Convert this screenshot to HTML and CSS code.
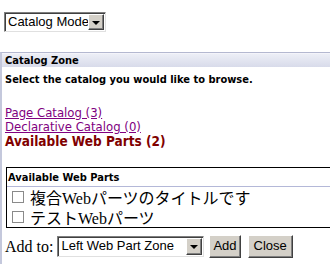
FILE: index.html
```html
<!DOCTYPE html>
<html lang="en">
<head>
    <meta charset="UTF-8">
    <title>Catalog Zone</title>
    <link rel="stylesheet" href="styles.css">
</head>
<body>
    <div class="mode-bar">
        <div class="dropdown mode-select">
            <span class="dropdown-text">Catalog Mode</span>
            <span class="dropdown-arrow"></span>
        </div>
    </div>

    <div class="catalog-zone">
        <div class="zone-header">Catalog Zone</div>
        <div class="zone-body">
            <div class="instruction">Select the catalog you would like to browse.</div>

            <div class="catalog-list">
                <a href="#" class="catalog-link">Page Catalog (3)</a>
                <a href="#" class="catalog-link">Declarative Catalog (0)</a>
                <span class="catalog-current">Available Web Parts (2)</span>
            </div>

            <div class="parts-box">
                <div class="parts-header">Available Web Parts</div>
                <label class="part-item"><input type="checkbox"> 複合Webパーツのタイトルです</label>
                <label class="part-item"><input type="checkbox"> テストWebパーツ</label>
            </div>

            <div class="add-row">
                <span class="add-label">Add to:</span>
                <div class="dropdown zone-select">
                    <span class="dropdown-text">Left Web Part Zone</span>
                    <span class="dropdown-arrow"></span>
                </div>
                <button class="btn">Add</button>
                <button class="btn">Close</button>
            </div>
        </div>
    </div>
</body>
</html>
```

FILE: styles.css
```css
html {
    overflow: hidden;
}
body {
    margin: 0;
    background: white;
    font-family: "Liberation Serif", "Noto Sans CJK JP", serif;
    font-size: 16px;
    color: black;
}
.mode-bar {
    padding: 12px 0 0 4px;
    height: 52px;
    box-sizing: border-box;
}
.dropdown {
    display: inline-flex;
    align-items: stretch;
    box-sizing: border-box;
    height: 20px;
    border: 1px solid #7f7f7f;
    border-right-color: #e0e0e0;
    border-bottom-color: #e0e0e0;
    box-shadow: inset 1px 1px 0 #404040;
    background: white;
    font-family: "Liberation Sans", Arial, sans-serif;
    font-size: 13px;
    line-height: 16px;
    padding: 1px 1px 1px 2px;
}
.dropdown-text {
    flex: 1;
    min-width: 0;
    overflow: hidden;
    padding-left: 1px;
    white-space: nowrap;
}
.dropdown-arrow {
    flex: none;
    width: 14px;
    background: #d4d0c8;
    border: 1px solid;
    border-color: #ffffff #404040 #404040 #ffffff;
    box-shadow: inset -1px -1px 0 #808080;
    position: relative;
}
.dropdown-arrow::after {
    content: "";
    position: absolute;
    left: 3px;
    top: 6px;
    border-left: 4px solid transparent;
    border-right: 4px solid transparent;
    border-top: 4px solid black;
}
.mode-select {
    width: 102px;
}
.catalog-zone {
    border-top: 1px solid #b4b8d0;
    border-left: 2px solid #c4c8dc;
}
.zone-header {
    font-family: "DejaVu Sans Condensed", "DejaVu Sans", sans-serif;
    font-weight: bold;
    font-size: 11px;
    line-height: 13px;
    padding: 0 3px;
    border-top: 1px solid #f4f4fa;
    background: linear-gradient(#eceef6, #d8dbea);
    color: black;
}
.zone-body {
    padding: 6px 0 6px 3px;
}
.instruction {
    font-family: "DejaVu Sans Condensed", "DejaVu Sans", sans-serif;
    font-weight: bold;
    font-size: 11px;
    line-height: 13px;
}
.catalog-list {
    margin-top: 20px;
    display: flex;
    flex-direction: column;
    align-items: flex-start;
    font-family: "DejaVu Sans Condensed", "DejaVu Sans", sans-serif;
    font-size: 13px;
    line-height: 14px;
}
.catalog-link {
    color: #800080;
}
.catalog-current {
    color: #800000;
    font-weight: bold;
    font-size: 13.5px;
}
.parts-box {
    margin-top: 19px;
    margin-left: 1px;
    border: 1px solid black;
    border-right: none;
}
.parts-header {
    font-family: "DejaVu Sans Condensed", "DejaVu Sans", sans-serif;
    font-weight: bold;
    font-size: 11px;
    line-height: 17px;
    padding: 1px 1px 0;
    border-bottom: 1px solid #b4b8d8;
}
.part-item {
    display: flex;
    align-items: center;
    height: 20px;
    padding-left: 5px;
    gap: 6px;
}
.part-item input {
    appearance: none;
    margin: 0;
    width: 12px;
    height: 12px;
    border: 1px solid #8a8a8a;
    background: white;
}
.add-row {
    display: flex;
    align-items: center;
    gap: 5px;
    margin-top: 7px;
}
.add-label {
    margin-right: -1px;
}
.zone-select {
    width: 147px;
    height: 21px;
}
.btn {
    font-family: "Liberation Sans", Arial, sans-serif;
    font-size: 13px;
    background: #d4d0c8;
    border: 1px solid;
    border-color: #ffffff #404040 #404040 #ffffff;
    box-shadow: inset -1px -1px 0 #808080;
    padding: 0 3px 2px;
    height: 23px;
    color: black;
}
.btn + .btn {
    margin-left: 2px;
    padding: 0 5px 2px;
}
```
